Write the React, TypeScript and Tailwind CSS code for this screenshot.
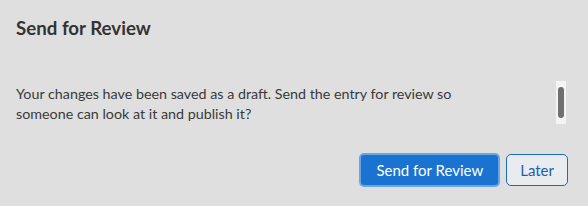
export default function App() {
  return (
    <div
      className="flex h-[206px] w-[588px] flex-col bg-[#dfdfdf] text-[#333]"
      style={{ fontFamily: "Lato, 'Open Sans', sans-serif" }}
    >
      <div className="px-4 pt-[16px]">
        <h2 className="text-[18.7px] font-bold leading-6 text-[#333]">Send for Review</h2>
      </div>
      <div className="mt-[44px] flex items-start pl-4 pr-[22px]">
        <p className="flex-1 text-[14.3px] leading-[20px] text-[#3a3a3a]">
          Your changes have been saved as a draft. Send the entry for review so
          <br />
          someone can look at it and publish it?
        </p>
        <div className="mt-[-3px] flex h-[43px] w-[10px] justify-center bg-[#f4f4f4] py-[6px]">
          <div className="w-[6px] rounded-full bg-[#707070]" />
        </div>
      </div>
      <div className="mt-auto flex justify-end gap-[6px] pb-[19px] pr-[20px]">
        <button className="h-[34px] rounded-[5px] border-2 border-[#6aa6e6] bg-[#1a73d1] px-[15px] text-[15px] text-white">
          Send for Review
        </button>
        <button className="mt-[1px] h-[32px] rounded-[5px] border border-[#1a6ac4] bg-[#e9ebee] px-[13px] text-[15px] text-[#1a5fae]">
          Later
        </button>
      </div>
    </div>
  );
}
